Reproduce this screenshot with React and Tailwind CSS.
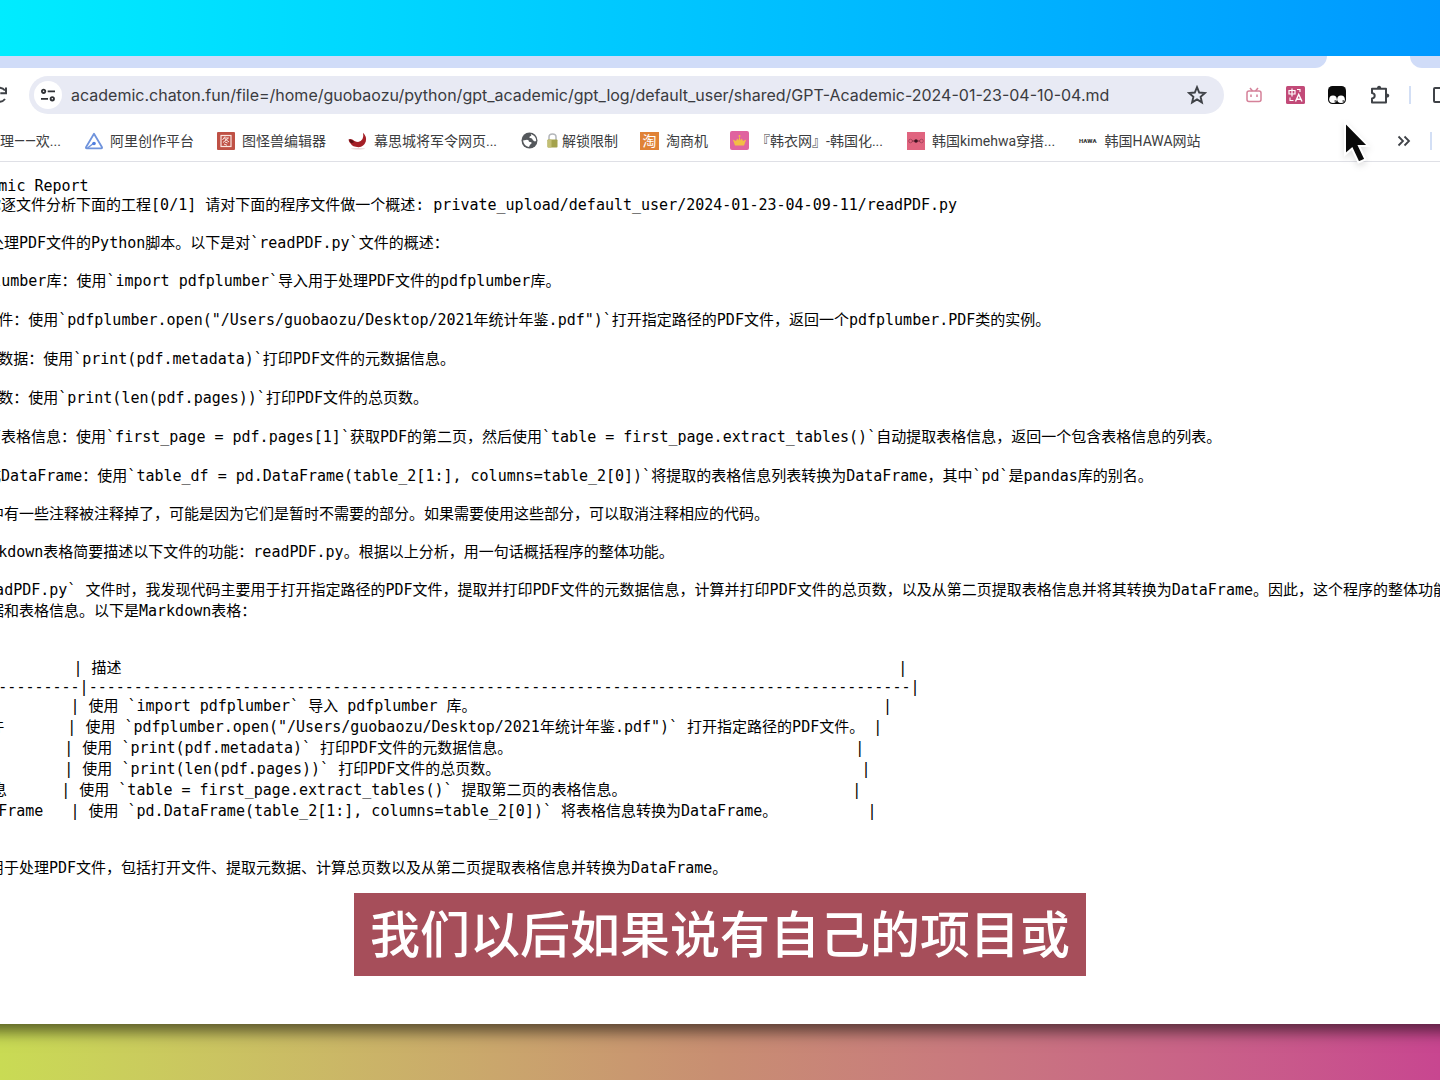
import React from "react";

const BOOKMARK_TEXT = "whitespace-nowrap text-[14px] leading-5 text-[#3c3d40]";

const AliIcon = () => (
  <svg className="h-[18px] w-[20px]" viewBox="0 0 20 18" fill="none">
    <path
      d="M10 1.8 L18 15.2 Q18.4 16.4 17.2 16.4 H2.8 Q1.6 16.4 2 15.2 Z"
      stroke="#6f93dc"
      strokeWidth="1.8"
      strokeLinejoin="round"
    />
    <path d="M3.5 16 L10 11" stroke="#6f93dc" strokeWidth="1.4" />
    <circle cx="10" cy="11.5" r="1.8" fill="#4f7fe0" />
  </svg>
);

const SealIcon = () => (
  <svg className="size-[18px]" viewBox="0 0 18 18" fill="none">
    <rect width="18" height="18" rx="1" fill="#bf5145" />
    <rect x="4" y="3.5" width="10" height="11" stroke="#fbe5e0" strokeWidth="1.2" />
    <path
      d="M8 4.5 L5.5 8 M7.5 6 H11.5 L6 10.5 M7.5 6.5 L12 10 M8 10 L10.5 11 M7 12 L10 13.3"
      stroke="#fbe5e0"
      strokeWidth="1"
    />
  </svg>
);

const HornIcon = () => (
  <svg className="h-[18px] w-[19px]" viewBox="0 0 19 18">
    <path
      d="M0.5 7.5 Q3 6 6.5 9 Q12 11.5 14.5 7 Q15.8 4 15 0.8 Q19 4.5 17.8 9.5 Q16 14.8 10.5 15.2 Q4.5 15 2.8 11.8 Q1 11 0.5 7.5 Z"
      fill="#a51f26"
    />
    <path d="M1 7.8 Q3 6.8 6.3 10 Q4 11.5 2.8 11 Z" fill="#5a1014" />
    <ellipse cx="10" cy="16.8" rx="7" ry="0.8" fill="#e6d5d5" />
  </svg>
);

const GlobeIcon = () => (
  <svg className="size-[17px]" viewBox="0 0 17 17">
    <circle cx="8.5" cy="8.5" r="8" fill="#55585c" />
    <path
      d="M2 8.5 L6 7.8 Q8 8 8 9.8 L10.5 10.3 Q11 12 9 12.8 L8 15 Q3 14.3 2 8.5 Z"
      fill="#fff"
    />
    <path
      d="M9.8 2 L10.3 3.8 Q8 4.5 8.4 5.8 L11 6.5 Q11.5 8.7 13.8 9.4 L15.2 9 Q15.4 4 9.8 2 Z"
      fill="#fff"
    />
  </svg>
);

const LockIcon = () => (
  <svg className="h-[15px] w-[11px]" viewBox="0 0 11 15" fill="none">
    <path d="M2 7 V4 Q2 1 5.5 1 Q9 1 9 4 V7" stroke="#b3b6ba" strokeWidth="1.5" />
    <rect x="0.5" y="6.5" width="10" height="8" rx="0.8" fill="#a4a24c" />
    <rect x="0.5" y="6.5" width="4" height="8" rx="0.8" fill="#c3bf74" />
  </svg>
);

const CrownIcon = () => (
  <svg className="size-[19px]" viewBox="0 0 19 19">
    <rect width="19" height="19" rx="2" fill="#e0639f" />
    <path
      d="M2.8 8.5 L6 10 L7.3 7.4 L8.5 9.5 L9.5 5 L10.5 9.5 L11.8 7.4 L13 10 L16.2 8.5 L14 14.5 H5 Z"
      fill="#f3bd45"
    />
    <circle cx="9.5" cy="5" r="1" fill="#f3bd45" />
  </svg>
);

const RoseIcon = () => (
  <svg className="size-[18px]" viewBox="0 0 18 18" fill="none">
    <rect width="18" height="18" fill="#e0647f" />
    <circle cx="3.5" cy="9" r="1.8" stroke="#9c4055" strokeWidth="0.8" />
    <circle cx="14.5" cy="9" r="1.8" stroke="#9c4055" strokeWidth="0.8" />
    <path d="M5 9 H13" stroke="#7c2c3f" strokeWidth="1" />
    <circle cx="9" cy="9" r="1.8" fill="#3d1220" />
  </svg>
);

const bookmarks = [
  { label: "阿里创作平台", icon: <AliIcon />, className: "ml-[23px] gap-[6px]" },
  { label: "图怪兽编辑器", icon: <SealIcon />, className: "ml-[23px] gap-[7px]" },
  { label: "幕思城将军令网页...", icon: <HornIcon />, className: "ml-[22px] gap-[7px]" },
];

const StarIcon = () => (
  <svg className="size-5" viewBox="0 0 20 20" fill="none">
    <path
      d="M10 2.2 L12.2 7.5 L17.9 8 L13.6 11.8 L14.9 17.4 L10 14.4 L5.1 17.4 L6.4 11.8 L2.1 8 L7.8 7.5 Z"
      stroke="#3f4247"
      strokeWidth="1.9"
    />
  </svg>
);

const TuneIcon = () => (
  <svg className="size-4" viewBox="0 0 16 16" fill="none" stroke="#2f3135" strokeWidth="1.8">
    <circle cx="3.6" cy="4.3" r="1.7" />
    <path d="M7.7 4.3 H15 M1 11.8 H8" />
    <circle cx="12.3" cy="11.8" r="1.7" />
  </svg>
);

const BiliIcon = () => (
  <svg className="size-4" viewBox="0 0 16 16" fill="none" stroke="#d58199" strokeWidth="1.5">
    <rect x="1" y="4" width="14" height="10.5" rx="2" />
    <path d="M4 1 L6.5 4 M12 1 L9.5 4 M5 7.5 V10 M11 7.5 V10" />
  </svg>
);

const TranslateIcon = () => (
  <svg className="h-[18px] w-[19px]" viewBox="0 0 19 18" fill="none" stroke="#fff">
    <rect width="19" height="18" rx="1.5" fill="#c24a78" stroke="none" />
    <path d="M3 4.5 H9 V8 H3 Z M6 2.5 V10.5" strokeWidth="1.2" />
    <path d="M9.5 15.5 L12.7 8.5 L16 15.5 M10.7 13.3 H14.8" strokeWidth="1.4" />
    <path d="M11 3.5 H14 V6 M4 11.5 V14.5 H7.5" strokeWidth="1.1" />
  </svg>
);

const MonkeyIcon = () => (
  <svg className="size-[18px]" viewBox="0 0 18 18">
    <rect width="18" height="18" rx="4.5" fill="#0b0b0b" />
    <circle cx="5" cy="13.2" r="3.8" fill="#fff" />
    <circle cx="13" cy="13.2" r="3.8" fill="#fff" />
    <circle cx="7.2" cy="15" r="0.8" fill="#0b0b0b" />
    <circle cx="15.2" cy="15" r="0.8" fill="#0b0b0b" />
  </svg>
);

const PuzzleIcon = () => (
  <svg className="size-5" viewBox="0 0 20 20" fill="none">
    <path
      d="M2 3.8 H16 V17.6 H2 V13.4 Q4.7 13 4.7 10.7 Q4.7 8.4 2 8 Z"
      stroke="#3f4247"
      strokeWidth="2"
      strokeLinejoin="round"
    />
    <path d="M7 3.6 A2.1 2.8 0 0 1 11.2 3.6 Z" fill="#3f4247" />
    <path d="M16.2 8.4 A3 2.2 0 0 1 16.2 12.8 Z" fill="#3f4247" />
  </svg>
);

const pad = (n) => " ".repeat(n);

// the file is shown raw, so the markdown table keeps its own padding
const tableRows = [
  "| 导入库" + pad(12) + "| 使用 `import pdfplumber` 导入 pdfplumber 库。" + pad(45) + "|",
  "| 打开PDF文件" + pad(7) +
    '| 使用 `pdfplumber.open("/Users/guobaozu/Desktop/2021年统计年鉴.pdf")` 打开指定路径的PDF文件。' +
    pad(1) + "|",
  "| 打印元数据" + pad(8) + "| 使用 `print(pdf.metadata)` 打印PDF文件的元数据信息。" + pad(38) + "|",
  "| 打印总页数" + pad(8) + "| 使用 `print(len(pdf.pages))` 打印PDF文件的总页数。" + pad(40) + "|",
  "| 提取表格信息" + pad(6) +
    "| 使用 `table = first_page.extract_tables()` 提取第二页的表格信息。" + pad(25) + "|",
  "| 转换为DataFrame" + pad(3) +
    "| 使用 `pd.DataFrame(table_2[1:], columns=table_2[0])` 将表格信息转换为DataFrame。" +
    pad(10) + "|",
];

const steps = [
  "1. 导入pdfplumber库：使用`import pdfplumber`导入用于处理PDF文件的pdfplumber库。",
  '2. 打开PDF文件：使用`pdfplumber.open("/Users/guobaozu/Desktop/2021年统计年鉴.pdf")`打开指定路径的PDF文件，返回一个pdfplumber.PDF类的实例。',
  "3. 打印PDF元数据：使用`print(pdf.metadata)`打印PDF文件的元数据信息。",
  "4. 打印PDF页数：使用`print(len(pdf.pages))`打印PDF文件的总页数。",
  "5. 提取第二页表格信息：使用`first_page = pdf.pages[1]`获取PDF的第二页，然后使用`table = first_page.extract_tables()`自动提取表格信息，返回一个包含表格信息的列表。",
  "6. 表格转换成DataFrame：使用`table_df = pd.DataFrame(table_2[1:], columns=table_2[0])`将提取的表格信息列表转换为DataFrame，其中`pd`是pandas库的别名。",
];

const Report = () => (
  <div className="-ml-[101px] whitespace-pre pt-4 font-['DejaVu_Sans_Mono','Noto_Sans_CJK_SC',monospace] text-[15px] leading-[21px] text-black">
    <h1 className="leading-[17px]"># GPT-Academic Report</h1>
    <div className="flex flex-col gap-[17px]">
      <p>
        {"## 接下来请你逐文件分析下面的工程[0/1] 请对下面的程序文件做一个概述: private_upload/default_user/2024-01-23-04-09-11/readPDF.py"}
      </p>
      <p>这是一个用于处理PDF文件的Python脚本。以下是对`readPDF.py`文件的概述：</p>
      <div className="flex flex-col gap-[18px]">
        {steps.map((step) => (
          <p key={step}>{step}</p>
        ))}
      </div>
      <p>注意，在代码中有一些注释被注释掉了，可能是因为它们是暂时不需要的部分。如果需要使用这些部分，可以取消注释相应的代码。</p>
      <p>## 用一张Markdown表格简要描述以下文件的功能：readPDF.py。根据以上分析，用一句话概括程序的整体功能。</p>
      <div>
        <p>
          当我分析 `readPDF.py` 文件时，我发现代码主要用于打开指定路径的PDF文件，提取并打印PDF文件的元数据信息，计算并打印PDF文件的总页数，以及从第二页提取表格信息并将其转换为DataFrame。因此，这个程序的整体功能
        </p>
        <p>是提取其元数据和表格信息。以下是Markdown表格：</p>
      </div>
    </div>
    <div className="py-9">
      <p>{"| 功能" + pad(14) + "| 描述" + pad(86) + "|"}</p>
      <p className="leading-[17px]">{"|" + "-".repeat(19) + "|" + "-".repeat(91) + "|"}</p>
      {tableRows.map((row) => (
        <p key={row}>{row}</p>
      ))}
    </div>
    <p>这个程序主要用于处理PDF文件，包括打开文件、提取元数据、计算总页数以及从第二页提取表格信息并转换为DataFrame。</p>
  </div>
);

const App = () => {
  return (
    <div className="relative flex min-h-screen flex-col overflow-hidden font-[Roboto,'Noto_Sans_CJK_SC',sans-serif]">
      <div className="h-14 bg-linear-to-r from-[#00ecff] to-[#0098ff]"></div>

      <div className="relative z-10 flex flex-1 flex-col overflow-x-clip bg-white shadow-[0_-12px_14px_20px_rgba(0,0,0,0.55)] [clip-path:inset(0_0_-40px_0)]">
        {/* Tab strip */}
        <div className="flex h-3">
          <div className="flex-1 rounded-br-xl bg-[#d0dcf8]"></div>
          <div className="w-[83px]"></div>
          <div className="w-[30px] rounded-bl-xl bg-[#d0dcf8]"></div>
        </div>

        {/* Toolbar */}
        <div className="flex h-[54px] items-center">
          <button aria-label="Reload" className="w-[29px]">
            <svg className="-ml-3 size-5" viewBox="0 0 20 20" fill="none" stroke="#3f4247" strokeWidth="2">
              <path d="M17 5.5 A7 7 0 1 0 17 14" />
              <path d="M18 2.5 V8.3 H12.3" />
            </svg>
          </button>
          <div className="flex h-[38px] flex-1 items-center rounded-full bg-[#e8eaf4] pl-[5px] pr-[17px]">
            <button aria-label="Site settings" className="flex size-7 items-center justify-center rounded-full bg-white">
              <TuneIcon />
            </button>
            <input
              aria-label="Address"
              className="ml-[9px] min-w-0 flex-1 bg-transparent font-[Inter,sans-serif] text-[16px] leading-6 text-[#3a3b40] outline-none"
              defaultValue="academic.chaton.fun/file=/home/guobaozu/python/gpt_academic/gpt_log/default_user/shared/GPT-Academic-2024-01-23-04-10-04.md"
            />
            <button aria-label="Bookmark this page">
              <StarIcon />
            </button>
          </div>
          <div className="flex w-[216px] shrink-0 items-center overflow-hidden pl-[22px]">
            <button aria-label="bilibili"><BiliIcon /></button>
            <button aria-label="Translate" className="ml-6"><TranslateIcon /></button>
            <button aria-label="Tampermonkey" className="ml-[23px]"><MonkeyIcon /></button>
            <button aria-label="Extensions" className="ml-6"><PuzzleIcon /></button>
            <div className="ml-[19px] h-[18px] w-[2px] shrink-0 bg-[#d3dff5]"></div>
            <button aria-label="Side panel" className="ml-[22px] h-4 w-5 shrink-0 rounded-[2px] border-2 border-[#3f4247]"></button>
          </div>
        </div>

        {/* Bookmarks */}
        <div className="flex h-10 items-center border-b border-[#dfe0e6] pb-[2px]">
          <a href="#" className={BOOKMARK_TEXT}>理——欢...</a>
          {bookmarks.map(({ label, icon, className }) => (
            <a key={label} href="#" className={`flex items-center ${className}`}>
              {icon}
              <span className={BOOKMARK_TEXT}>{label}</span>
            </a>
          ))}
          <a href="#" className="ml-6 flex items-center">
            <GlobeIcon />
            <span className="ml-[9px]"><LockIcon /></span>
            <span className={`ml-1 ${BOOKMARK_TEXT}`}>解锁限制</span>
          </a>
          <a href="#" className="ml-[22px] flex items-center gap-[7px]">
            <span className="flex h-[18px] w-[19px] items-center justify-center bg-[#e08236] text-[14px] leading-none text-white">淘</span>
            <span className={BOOKMARK_TEXT}>淘商机</span>
          </a>
          <a href="#" className="ml-[22px] flex items-center gap-[7px]">
            <CrownIcon />
            <span className={BOOKMARK_TEXT}>『韩衣网』-韩国化...</span>
          </a>
          <a href="#" className="ml-6 flex items-center gap-[7px]">
            <RoseIcon />
            <span className={BOOKMARK_TEXT}>韩国kimehwa穿搭...</span>
          </a>
          <a href="#" className="ml-6 flex items-center gap-2">
            <span className="text-[6px] font-black text-[#3a3a3a]">HAWA</span>
            <span className={BOOKMARK_TEXT}>韩国HAWA网站</span>
          </a>
          <button aria-label="More bookmarks" className="ml-auto">
            <svg className="h-3 w-[14px]" viewBox="0 0 14 12" fill="none" stroke="#3f4247" strokeWidth="1.8">
              <path d="M1.5 1.5 L6 6 L1.5 10.5 M7.5 1.5 L12 6 L7.5 10.5" />
            </svg>
          </button>
          <div className="ml-[19px] mr-2 h-[18px] w-[2px] bg-[#d3dff5]"></div>
        </div>

        <Report />
      </div>

      <div className="h-14 bg-linear-to-r from-[#c9db54] via-[#c88e72] to-[#c84690]"></div>

      {/* Subtitle */}
      <div className="absolute inset-x-0 bottom-[104px] z-20 flex justify-center">
        <p className="whitespace-nowrap bg-[#a64e5a] px-4 pt-1 text-[50px] font-medium leading-[79px] text-white">
          我们以后如果说有自己的项目或
        </p>
      </div>

      {/* Mouse pointer */}
      <svg
        className="absolute right-[66px] top-[118px] z-20 h-[52px] w-[34px] drop-shadow-md"
        viewBox="0 0 34 52"
      >
        <path
          d="M5 4 V36.5 L12 30.5 L18.5 44.5 L25.5 41.5 L19 28 H28.5 Z"
          fill="#0a0a0a"
          stroke="#fff"
          strokeWidth="2"
        />
      </svg>
    </div>
  );
};

export default App;
